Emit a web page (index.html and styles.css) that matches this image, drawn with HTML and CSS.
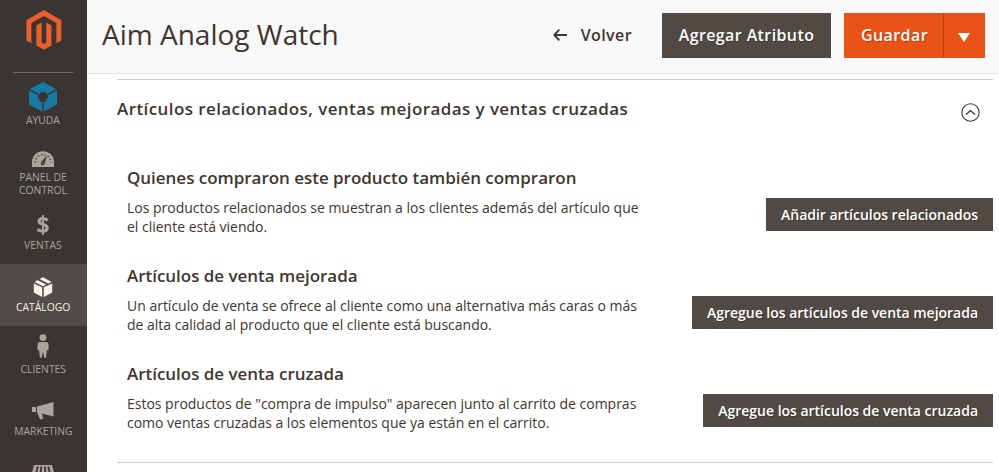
FILE: index.html
```html
<!DOCTYPE html>
<html lang="es">
<head>
<meta charset="UTF-8">
<meta name="viewport" content="width=device-width, initial-scale=1.0">
<title>Aim Analog Watch</title>
<link rel="stylesheet" href="styles.css">
</head>
<body>
  <nav class="menu">
    <a class="logo" href="#">
      <svg width="36" height="41" viewBox="0 0 36 41" fill="#eb5f2c">
        <path d="M17.9 0 35.4 10.2V30.4L30.4 33.3V13.1L17.9 5.9 5.4 13.1V33.3L.4 30.4V10.2z"/>
        <path d="M10.4 15.5 15.6 12.6V32.5L17.9 34 20.2 32.5V12.6L25.4 15.5V35.4L17.9 39.8 10.4 35.4z"/>
      </svg>
    </a>
    <a class="item item-help" href="#">
      <span class="icon">
        <svg width="30" height="30" viewBox="0 0 30 30">
          <path fill="#1979a3" d="M15 0 29 7.5V22.5L15 30 1 22.5V7.5z"/>
          <path fill="none" stroke="#3a3532" stroke-width="1.4" d="M.5 7.3 15 15 29.5 7.3M15 15V30"/>
          <path fill="#3a3532" d="M12.4 10.2H17.6L20.2 15 17.6 19.8H12.4L9.8 15z"/>
        </svg>
      </span>
      <span class="label">Ayuda</span>
    </a>
    <a class="item item-panel" href="#">
      <span class="icon">
        <svg width="22" height="16" viewBox="0 0 22 16">
          <path fill="#aaa49c" d="M0 16V11A11 10.8 0 0 1 22 11V16z"/>
          <path fill="none" stroke="#3a3532" stroke-width="1.4" stroke-dasharray="1.3 2.1" d="M3.2 11.5A7.8 7.8 0 0 1 18.8 11.5"/>
          <path fill="#3a3532" d="M14.8 4.6 12.8 12A2 2 0 1 1 9.5 10.8z"/>
          <circle cx="11" cy="12" r=".7" fill="#aaa49c"/>
        </svg>
      </span>
      <span class="label">Panel de control</span>
    </a>
    <a class="item" href="#">
      <span class="icon">
        <svg width="14" height="20" viewBox="0 0 14 20" fill="none" stroke="#aaa49c">
          <path stroke-width="3.1" d="M11.8 5.2C10.2 4.1 8.4 3.6 6.7 3.6 4.4 3.6 3 4.7 3 6.3 3 10.2 11.2 8.5 11.2 12.9 11.2 15 9.5 16.1 6.9 16.1 4.9 16.1 3 15.5 1.3 14.6"/>
          <path stroke-width="1.9" d="M7 0V20"/>
        </svg>
      </span>
      <span class="label">Ventas</span>
    </a>
    <a class="item active" href="#">
      <span class="icon">
        <svg width="20" height="20" viewBox="0 0 20 20" fill="#f7f3eb">
          <path d="M.8 6.5 9.2 10.3V20L.8 15.5zM19.2 6.5 10.8 10.3V20L19.2 15.5z"/>
          <path d="M1.4 4.9 4.6 3.2 13.2 7.6 10 9.2zM6.6 2.1 10 .2 18.6 4.9 15.2 6.6z"/>
        </svg>
      </span>
      <span class="label">Catálogo</span>
    </a>
    <a class="item item-customers" href="#">
      <span class="icon">
        <svg width="12" height="24" viewBox="0 0 12 24" fill="#aaa49c">
          <circle cx="6" cy="3.6" r="3.4"/>
          <path d="M3 8H9Q11.5 8 11.5 10.5V16.2H9.9L9.1 23.8H7.3L6 17.8 4.7 23.8H2.9L2.1 16.2H.5V10.5Q.5 8 3 8z"/>
        </svg>
      </span>
      <span class="label">Clientes</span>
    </a>
    <a class="item" href="#">
      <span class="icon">
        <svg width="22" height="18" viewBox="0 0 22 18" fill="#aaa49c">
          <path d="M0 5H4V10H0zM5 4.5 21.5 0V14.5L10 11.4 11.2 16.8 8.2 17.6 5 10.3z"/>
        </svg>
      </span>
      <span class="label">Marketing</span>
    </a>
    <a class="item item-content" href="#">
      <span class="icon">
        <svg width="24" height="20" viewBox="0 0 24 20">
          <path fill="#aaa49c" d="M3 0H21L24 11H0zM2 13H22V20H2z"/>
          <path stroke="#3a3532" stroke-width="1.8" d="M6.8 1.5 4.5 11M10.2 1.5 9.3 11M13.8 1.5 14.7 11M17.2 1.5 19.5 11"/>
        </svg>
      </span>
    </a>
  </nav>

  <main class="page">
    <header class="page-header">
      <h1>Aim Analog Watch</h1>
      <button class="back">
        <svg width="14" height="12" viewBox="0 0 14 12" fill="none" stroke="#41362f" stroke-width="1.9">
          <path d="M6.3.7 1.3 6 6.3 11.3M1.5 6H14"/>
        </svg>
        Volver
      </button>
      <button class="btn-attribute">Agregar Atributo</button>
      <div class="save">
        <button class="btn-save">Guardar</button>
        <button class="btn-toggle" aria-label="Más">
          <svg width="12" height="9" viewBox="0 0 12 9" fill="#fff"><path d="M0 0H12L6 9z"/></svg>
        </button>
      </div>
    </header>

    <section class="related">
      <div class="section-title">
        <h2>Artículos relacionados, ventas mejoradas y ventas cruzadas</h2>
        <svg class="collapse" width="19" height="19" viewBox="0 0 19 19" fill="none" stroke="#41362f">
          <circle cx="9.5" cy="9.5" r="8.7" stroke-width="1.1"/>
          <path stroke-width="1.3" d="M4.9 11.5 9.5 7.7 14.1 11.5"/>
        </svg>
      </div>

      <div class="block">
        <div class="block-text">
          <h3>Quienes compraron este producto también compraron</h3>
          <p>Los productos relacionados se muestran a los clientes además del artículo que<br>el cliente está viendo.</p>
        </div>
        <button class="btn-add">Añadir artículos relacionados</button>
      </div>
      <div class="block">
        <div class="block-text">
          <h3>Artículos de venta mejorada</h3>
          <p>Un artículo de venta se ofrece al cliente como una alternativa más caras o más<br>de alta calidad al producto que el cliente está buscando.</p>
        </div>
        <button class="btn-add">Agregue los artículos de venta mejorada</button>
      </div>
      <div class="block">
        <div class="block-text">
          <h3>Artículos de venta cruzada</h3>
          <p>Estos productos de "compra de impulso" aparecen junto al carrito de compras<br>como ventas cruzadas a los elementos que ya están en el carrito.</p>
        </div>
        <button class="btn-add">Agregue los artículos de venta cruzada</button>
      </div>
    </section>
  </main>
</body>
</html>
```
FILE: styles.css
```css
* {
  box-sizing: border-box;
}
body {
  margin: 0;
  height: 472px;
  display: flex;
  overflow: hidden;
  background: #fff;
  color: #41362f;
  font-family: 'Open Sans', 'Noto Sans', sans-serif;
  font-size: 14px;
}
h1, h2, h3, p {
  margin: 0;
}
button {
  border: none;
  padding: 0;
  font-family: inherit;
  font-weight: 600;
  cursor: pointer;
}
svg {
  display: block;
  flex: none;
}

/* left menu */
.menu {
  width: 87px;
  height: 472px;
  flex: none;
  overflow: hidden;
  background: #3a3532;
}
.logo {
  display: flex;
  justify-content: center;
  height: 73px;
  margin: 0 14px 0 13px;
  padding: 10px 0 0 1px;
  border-bottom: 1px solid #736963;
}
.item {
  display: flex;
  flex-direction: column;
  align-items: center;
  height: 62px;
  padding: 10px 12px 0 11px;
  color: #aaa49c;
  font-size: 11.5px;
  line-height: 13px;
  text-align: center;
  text-decoration: none;
  text-transform: uppercase;
}
.item-help {
  margin-top: 3px;
  height: 58px;
  padding-top: 5px;
}
.item-help .icon {
  height: 32px;
}
.item-panel {
  height: 68px;
}
.icon {
  display: flex;
  align-items: center;
  height: 26px;
  flex: none;
}
.label {
  transform: scaleX(.9);
}
.item-panel .icon {
  padding-top: 3px;
}
.item-customers .icon {
  padding-bottom: 6px;
}
.item-content .icon {
  padding-top: 3px;
}
.active {
  background: #524c49;
  color: #f7f3eb;
}

/* header */
.page {
  flex: 1;
}
.page-header {
  display: flex;
  align-items: center;
  height: 74px;
  padding: 0 14px 3px 15px;
  background: #f8f8f8;
  border-bottom: 1px solid #e3e3e3;
}
.page-header h1 {
  flex: 1;
  padding-bottom: 2px;
  font-size: 28px;
  font-weight: 400;
}
.page-header button {
  height: 45px;
  font-size: 16px;
  letter-spacing: .4px;
}
.page-header .back {
  display: flex;
  align-items: center;
  gap: 14px;
  margin-right: 30px;
  background: none;
  color: #41362f;
}
.btn-attribute, .btn-add {
  background: #514943;
  color: #fff;
  text-shadow: 1px 1px 0 rgba(0, 0, 0, .25);
}
.btn-attribute {
  width: 169px;
  margin-right: 13px;
}
.save {
  display: flex;
}
.btn-save, .btn-toggle {
  background: #ea5317;
  color: #fff;
  text-shadow: 1px 1px 0 rgba(0, 0, 0, .25);
}
.page-header .btn-save {
  width: 99px;
  padding-left: 2px;
}
.btn-toggle {
  display: flex;
  align-items: center;
  justify-content: center;
  width: 42px;
  padding: 4px 1px 0 0;
  border-left: 1px solid #b84002;
}

/* related products */
.related {
  margin: 5px 6px 0 30px;
  height: 384px;
  border-top: 1px solid #ccc;
  border-bottom: 1px solid #ccc;
}
.section-title {
  display: flex;
  justify-content: space-between;
  height: 86px;
  padding: 17px 13px 0 0;
}
.section-title h2 {
  font-size: 17px;
  font-weight: 600;
  line-height: 23px;
  letter-spacing: .41px;
}
.collapse {
  margin-top: 6px;
}
.block {
  display: flex;
  justify-content: space-between;
  align-items: flex-start;
  height: 98px;
  padding-left: 10px;
}
.block h3 {
  margin-bottom: 9px;
  font-size: 17px;
  font-weight: 600;
  line-height: 23px;
  letter-spacing: -.03px;
}
.block p {
  line-height: 19px;
  letter-spacing: -.01px;
}
.btn-add {
  height: 33px;
  margin-top: 32px;
  padding: 0 15px;
  font-size: 14px;
  letter-spacing: -.02px;
}
```
